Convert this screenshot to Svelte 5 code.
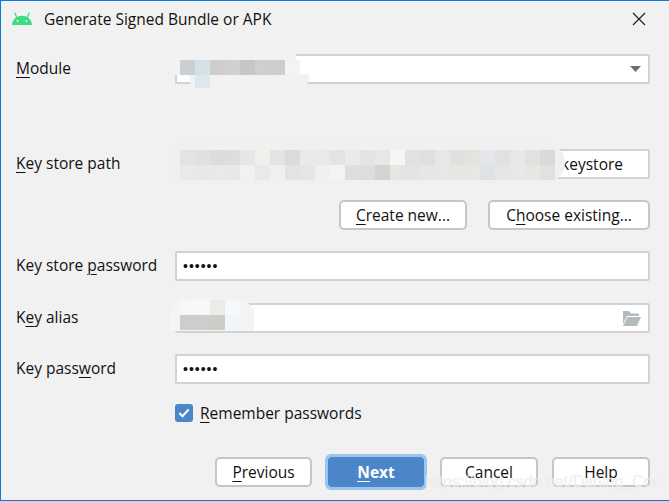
<script>
  const cell = (x, y, c, h = 15) => ({ x, y, c, h });
  const row = (x, y, colors) => colors.map((c, i) => cell(x + i * 15, y, c));

  const mosaic = [
    ...row(180, 60, ["#c9d0d3", "#d3e0e7", "#cccdcc", "#cfd0cf", "#c5c6c8", "#cfcfcd", "#cdcdcb", "#f2f3f6"]),
    cell(195, 75, "#dce8ee", 13),
    ...row(180, 150, ["#e2e3e3", "#e0e0e0", "#dcdcdc", "#dbdddf", "#e5e7e6", "#efefec", "#e4e4e5", "#dedadb", "#e8eaed", "#ebe9e6", "#e1e3e6", "#e9ebea", "#e3e4e3", "#e6e7e7", "#f5f5f5", "#e2e2e2", "#dfdfdc", "#e6e8e7", "#dfe0e0", "#e5e3e0", "#e4e6e9", "#e1e1e1", "#e8e8e8", "#e3e1dd", "#d8dbde"]),
    ...row(180, 165, ["#e8e9e9", "#e8e8e8", "#e7e9ea", "#e8e8e6", "#f1f1f1", "#e8e9ea", "#eff0ee", "#e3e3e0", "#e3e5e7", "#f0f0ee", "#f3f3f3", "#dedede", "#dcdddc", "#d1d4d0", "#e6e5e2", "#e2e4e6", "#e5e7e7", "#e6e7e7", "#e7e6e3", "#e7e7e4", "#dfe2e5", "#e5e7e6", "#e7e8e7", "#e6e6e3", "#dfe1e3"]),
    ...row(180, 300, ["#f7f7f7", "#f8f8f8", "#ebebe9", "#f5f7f9"]),
    ...row(180, 315, ["#cdcdcb", "#cbcdd0", "#ceccc7", "#f1f5f9"])
  ];
</script>

<div class="dialog">
  <header class="title">
    <svg class="android" width="22" height="14" viewBox="0 0 22 14">
      <path d="M1 13C1.400 7.500 5.500 3.700 11 3.700S20.600 7.500 21 13Z" fill="#3ddc84" />
      <path d="M5.800 5.500 3.800 1M16.200 5.500 18.200 1" stroke="#3ddc84" stroke-width="1.300" stroke-linecap="round" />
      <circle cx="6.500" cy="9" r="1" fill="#f1f1f1" />
      <circle cx="15.500" cy="9" r="1" fill="#f1f1f1" />
    </svg>
    <span>Generate Signed Bundle or APK</span>
    <svg class="close" width="14" height="14" viewBox="0 0 14 14">
      <path d="M1 1 13 13M13 1 1 13" stroke="#222" stroke-width="1.200" />
    </svg>
  </header>

  <div class="form">
    <div class="row">
      <span class="label"><u>M</u>odule</span>
      <div class="field select">
        <svg width="11" height="6" viewBox="0 0 11 6"><path d="M0 0H11L5.500 6Z" fill="#6e6e6e" /></svg>
      </div>
    </div>

    <div class="row path">
      <span class="label"><u>K</u>ey store path</span>
      <div class="field end"><span>keystore</span></div>
    </div>

    <div class="file-actions">
      <button><u>C</u>reate new...</button>
      <button class="choose">C<u>h</u>oose existing...</button>
    </div>

    <div class="row password">
      <span class="label">Key store <u>p</u>assword</span>
      <div class="field"><span class="dots">••••••</span></div>
    </div>

    <div class="row alias">
      <span class="label">K<u>e</u>y alias</span>
      <div class="field select">
        <svg width="19" height="15" viewBox="0 0 19 15">
          <path d="M1 0H7L9 2.500H17V5H5L1 13Z" fill="#b4babe" />
          <path d="M5.500 6H19L15 15H1Z" fill="#b4babe" />
        </svg>
      </div>
    </div>

    <div class="row key-password">
      <span class="label">Key pass<u>w</u>ord</span>
      <div class="field"><span class="dots">••••••</span></div>
    </div>

    <div class="remember">
      <span class="check">
        <svg width="12" height="10" viewBox="0 0 12 10"><path d="M1.300 5 4.500 8.200 10.700 1.300" fill="none" stroke="#fff" stroke-width="2" /></svg>
      </span>
      <span><u>R</u>emember passwords</span>
    </div>
  </div>

  <footer class="actions">
    <button class="previous"><u>P</u>revious</button>
    <button class="next"><u>N</u>ext</button>
    <button class="cancel">Cancel</button>
    <button class="help">Help</button>
  </footer>

  <!-- blurred-out areas lying over the form -->
  <div class="blob b1"></div>
  <div class="blob b2"></div>
  <div class="blob b3"></div>
  <div class="blob b4"></div>
  {#each mosaic as m}
    <div class="tile" style="left:{m.x}px;top:{m.y}px;height:{m.h}px;background:{m.c}"></div>
  {/each}

  <div class="watermark">https://blog.csdn.net/Daning_Coc</div>
</div>

<style>
  :global(body) {
    margin: 0;
  }

  .dialog {
    position: relative;
    box-sizing: border-box;
    width: 669px;
    height: 501px;
    overflow: hidden;
    display: flex;
    flex-direction: column;
    background: #f1f1f1;
    border: 1px solid #0a7ad6;
    border-right: 0;
    font-family: "Open Sans", sans-serif;
    font-size: 15.5px;
    color: #111;
  }

  u {
    text-decoration-thickness: 1px;
    text-underline-offset: 3px;
  }

  .title {
    display: flex;
    align-items: center;
    height: 36px;
    padding: 0 23px 0 10px;
  }

  .android {
    margin-right: 11px;
  }

  .close {
    margin-left: auto;
  }

  .form {
    display: flex;
    flex-direction: column;
    padding: 17px 19px 0 15px;
  }

  .row {
    display: flex;
    align-items: center;
    height: 30px;
  }

  .label {
    width: 159px;
    flex: none;
    padding-bottom: 3px;
  }

  .field {
    flex: 1;
    box-sizing: border-box;
    height: 100%;
    display: flex;
    align-items: center;
    padding: 0 6px;
    background: #fff;
    border: 2px solid #d2d2d2;
    border-radius: 2px;
  }

  .select {
    justify-content: flex-end;
    padding-right: 7px;
  }

  .end {
    justify-content: flex-end;
    padding-right: 25px;
    padding-bottom: 1px;
  }

  .dots {
    font-family: "Liberation Sans", sans-serif;
    font-size: 14px;
    letter-spacing: 1px;
  }

  .path {
    margin-top: 65px;
  }

  .file-actions {
    display: flex;
    justify-content: flex-end;
    gap: 21px;
    margin-top: 21px;
  }

  .file-actions button {
    width: 128px;
  }

  .file-actions .choose {
    width: 162px;
  }

  .password {
    margin-top: 21px;
  }

  .alias {
    margin-top: 22px;
  }

  .key-password {
    margin-top: 21px;
  }

  .remember {
    display: flex;
    align-items: center;
    gap: 7px;
    margin: 18px 0 0 159px;
  }

  .check {
    width: 18px;
    height: 18px;
    display: flex;
    align-items: center;
    justify-content: center;
    background: #4a86c8;
    border-radius: 3px;
  }

  button {
    box-sizing: border-box;
    height: 30px;
    padding: 0 0 1px;
    font: inherit;
    color: inherit;
    background: #fff;
    border: 2px solid #c6c6c6;
    border-radius: 5px;
  }

  .actions {
    display: flex;
    justify-content: flex-end;
    padding: 33px 19px 0 0;
  }

  .actions button {
    width: 98px;
    padding: 0;
  }

  .actions .previous {
    width: 97px;
  }

  .actions .next {
    width: 96px;
    margin: 0 16px 0 16px;
    background: #4a86c8;
    border-color: #4a86c8;
    outline: 3px solid #9cc4f0;
    color: #fff;
    font-weight: 700;
    border-radius: 3px;
  }

  .actions .help {
    margin-left: 14px;
  }

  .blob {
    position: absolute;
    background: #f2f2f3;
  }

  .b1 {
    left: 168px;
    top: 46px;
    width: 127px;
    height: 28px;
    border-radius: 14px 8px 0 0;
  }

  .b2 {
    left: 188px;
    top: 73px;
    width: 120px;
    height: 14px;
    border-radius: 0 0 10px 10px;
  }

  .b3 {
    left: 167px;
    top: 142px;
    width: 397px;
    height: 40px;
    background: #f0f0f0;
    border-radius: 12px 20px 20px 12px / 6px 20px 20px 6px;
  }

  .b4 {
    left: 169px;
    top: 297px;
    width: 84px;
    height: 33px;
    background: #f4f4f4;
    border-radius: 14px 28px 0 4px / 14px 14px 0 4px;
  }

  .tile {
    position: absolute;
    width: 15px;
    margin: -1px 0 0 -1px;
  }

  .watermark {
    position: absolute;
    left: 424px;
    top: 472px;
    font-family: "Liberation Sans", sans-serif;
    font-size: 16px;
    white-space: nowrap;
    color: rgba(242, 242, 242, 0.85);
    text-shadow: 0 0 1px rgba(205, 205, 205, 0.4);
  }
</style>
